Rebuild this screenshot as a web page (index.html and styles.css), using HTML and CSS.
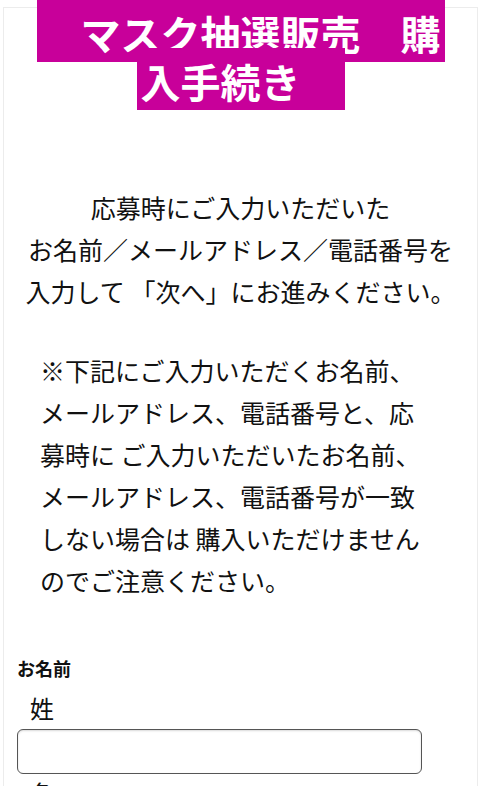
FILE: index.html
```html
<!DOCTYPE html>
<html lang="ja">
<head>
<meta charset="utf-8">
<title>マスク抽選販売　購入手続き</title>
<link rel="stylesheet" href="styles.css">
</head>
<body>
<div class="page">
  <h1 class="title"><span class="title-mark">　マスク抽選販売　購<br>入手続き　</span></h1>
  <p class="lead">応募時にご入力いただいた<br>お名前／メールアドレス／電話番号を<br>入力して 「次へ」にお進みください。</p>
  <p class="note">※下記にご入力いただくお名前、メールアドレス、電話番号と、応募時に ご入力いただいたお名前、メールアドレス、電話番号が一致しない場合は 購入いただけませんのでご注意ください。</p>
  <div class="field">
    <div class="field-label">お名前</div>
    <div class="sub-label">姓</div>
    <input class="text-input" type="text">
    <div class="sub-label">名</div>
    <input class="text-input" type="text">
  </div>
</div>
</body>
</html>
```
FILE: styles.css
```css
html, body {
  margin: 0;
  padding: 0;
  background: #fff;
}
body {
  font-family: "Noto Sans CJK JP", "Noto Sans", sans-serif;
  color: #111;
}
.page {
  margin: 7px 2px 0 3px;
  border: 1px solid #ececec;
  border-bottom: none;
  min-height: 900px;
}
.title {
  margin: 1px 0 0;
  text-align: center;
  font-size: 40px;
  line-height: 48px;
  font-weight: 700;
  color: #fff;
}
.title-mark {
  background: #c8009a;
  padding: 4px 4px 0;
  white-space: pre;
  -webkit-box-decoration-break: clone;
  box-decoration-break: clone;
}
.lead {
  margin: 81px 0 0;
  text-align: center;
  font-size: 25px;
  line-height: 42px;
}
.note {
  margin: 37px 0 0;
  padding-left: 36px;
  width: 390px;
  font-size: 25px;
  line-height: 42px;
}
.field {
  margin-top: 55px;
  padding-left: 13px;
}
.field-label {
  font-size: 18px;
  line-height: 24px;
  font-weight: 700;
}
.sub-label {
  margin-top: 13px;
  padding-left: 13px;
  font-size: 24px;
  line-height: 30px;
}
.text-input {
  display: block;
  box-sizing: border-box;
  width: 405px;
  height: 45px;
  margin: 6px 0 0;
  border: 1px solid #555;
  border-radius: 6px;
  box-shadow: inset 0 1px 2px rgba(0,0,0,0.15);
  background: #fff;
}
.text-input + .sub-label {
  margin-top: 4px;
}
```
